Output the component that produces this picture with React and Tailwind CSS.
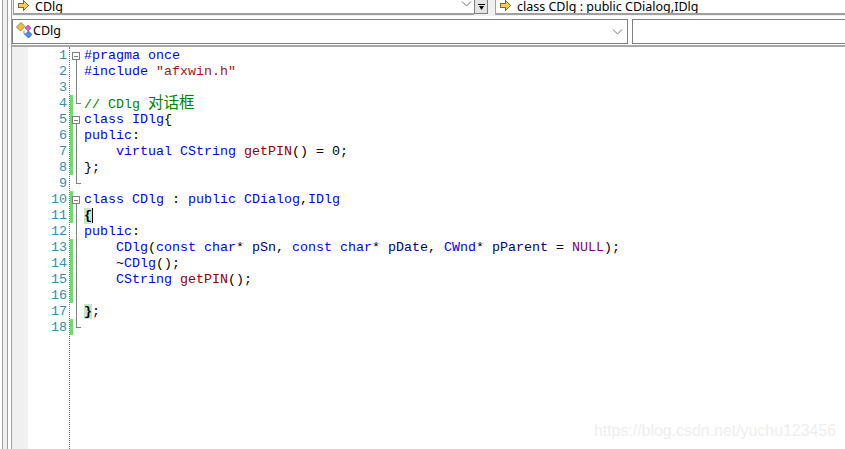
const mono = "font-['Liberation_Mono','Noto_Sans_CJK_SC',monospace]";

const KW = "text-[#0000ff]";
const FN = "text-[#880000]";
const ARG = "text-[#000080]";
const PUR = "text-[#800080]";

// which lines have the green "changed" bar
const changed = [4, 5, 6, 7, 8, 10, 11, 13, 14, 15, 16, 18];
// fold marks per line: box, line, end
const folds = {
  1: "box", 2: "line", 3: "line", 4: "end",
  5: "box", 6: "line", 7: "line", 8: "line", 9: "end",
  10: "box", 11: "line", 12: "line", 13: "line", 14: "line", 15: "line", 16: "line", 17: "line", 18: "end",
};

const lines = [
  <span className={KW}>#pragma once</span>,
  <>
    <span className={KW}>#include </span>
    <span className="text-[#a31515]">"afxwin.h"</span>
  </>,
  null,
  <span className="text-[#008000]">
    // CDlg <span className="text-[15.5px]">对话框</span>
  </span>,
  <>
    <span className={KW}>class IDlg</span>
    <span className="text-black">{"{"}</span>
  </>,
  <>
    <span className={KW}>public</span>:
  </>,
  <>
    <span className={KW}>{"    virtual CString "}</span>
    <span className={FN}>getPIN</span>() = 0;
  </>,
  <>{"};"}</>,
  null,
  <>
    <span className={KW}>class CDlg </span>: <span className={KW}>public CDialog</span>,<span className={KW}>IDlg</span>
  </>,
  <span className="inline-flex">
    <span className="bg-[#c8e6c9] font-bold text-black">{"{"}</span>
    <span className="w-px h-[15px] bg-black" />
  </span>,
  <>
    <span className={KW}>public</span>:
  </>,
  <>
    <span className={KW}>{"    CDlg"}</span>(<span className={KW}>const char</span>* <span className={ARG}>pSn</span>,{" "}
    <span className={KW}>const char</span>* <span className={ARG}>pDate</span>, <span className={KW}>CWnd</span>*{" "}
    <span className={ARG}>pParent</span> = <span className={PUR}>NULL</span>);
  </>,
  <>
    {"    ~"}
    <span className={KW}>CDlg</span>();
  </>,
  <>
    <span className={KW}>{"    CString "}</span>
    <span className={FN}>getPIN</span>();
  </>,
  null,
  <>
    <span className="bg-[#c8e6c9] font-bold text-black">{"}"}</span>;
  </>,
  null,
];

function Gutter({ n }) {
  const kind = folds[n];
  return (
    <svg width="14" height="16" className="block" shapeRendering="crispEdges">
      {changed.includes(n) && <rect x="0" y="0" width="3" height="16" fill="#66e066" />}
      {kind === "box" && (
        <>
          <rect x="2.5" y="5.5" width="7" height="7" fill="#fff" stroke="#808080" />
          <path d="M4 9h4M6.5 13v3" stroke="#808080" fill="none" />
        </>
      )}
      {kind === "line" && <path d="M6.5 0v16" stroke="#808080" fill="none" />}
      {kind === "end" && <path d="M6.5 0v8.5H11" stroke="#808080" fill="none" />}
    </svg>
  );
}

function ArrowIcon() {
  return (
    <svg width="11" height="12" viewBox="0 0 11 12" className="block" shapeRendering="crispEdges">
      <path d="M0.5 3.5h5v-3l5 5-5 5v-3h-5z" fill="#f5cf55" stroke="#7a6a30" />
    </svg>
  );
}

function ClassIcon() {
  return (
    <svg width="16" height="16" viewBox="0 0 16 16" className="block">
      <path d="M0.500 5l4.500-4.500 4 4-4.500 4.500z" fill="#e8c040" stroke="#8a7020" strokeWidth="0.8" />
      <path d="M8 8.500v3.500h2" stroke="#7a8aa0" fill="none" />
      <path d="M9 6l3-3 3 3-3 3z" fill="#e060d0" stroke="#904090" strokeWidth="0.7" />
      <path d="M9 12.500l3.500-3.500 3.500 3.500-3.500 3.500z" fill="#4a90e0" stroke="#2a5a9a" strokeWidth="0.7" />
    </svg>
  );
}

function Chevron() {
  return (
    <svg width="11" height="6" viewBox="0 0 11 6" className="block">
      <path d="M1 0.500l4.500 4.500 4.500-4.500" stroke="#707070" fill="none" />
    </svg>
  );
}

export default function App() {
  return (
    <div className="relative flex h-[449px] w-[845px] overflow-hidden bg-white">
      {/* Left window edge */}
      <div className="flex w-[12px] shrink-0">
        <div className="w-[2px] bg-white" />
        <div className="w-[1px] bg-[#a0a0a0]" />
        <div className="w-[4px] bg-[#f0f0f0]" />
        <div className="w-[1px] bg-[#6fa8d0]" />
        <div className="w-[3px] bg-white" />
        <div className="w-[1px] bg-[#6fa8d0]" />
      </div>

      <div className="flex min-w-0 flex-1 flex-col">
        {/* Class combo row, cut off by the crop */}
        <div className="flex h-[16px] shrink-0 bg-[#f0f0f0] font-['Noto_Sans',sans-serif] text-[12.5px] text-black">
          <div className="ml-[1px] flex h-[15px] w-[461px] items-end justify-between overflow-hidden border-b-2 border-l border-[#a0a0a0] bg-white">
            <div className="flex h-[13px] items-center">
              <div className="ml-[4px] mb-[2px]">
                <ArrowIcon />
              </div>
              <span className="ml-[6px] mb-[1px] leading-[13px]">CDlg</span>
            </div>
            <div className="mr-[2px] mb-[6px]">
              <Chevron />
            </div>
          </div>
          <div className="flex h-[14px] w-[14px] items-end justify-center border-x border-b border-[#808080] bg-[#e4e4e4] pb-[3px]">
            <svg width="7" height="6" viewBox="0 0 7 6" className="block">
              <path d="M0 0h7v1H0zM1 2h5L3.500 6z" fill="#000" />
            </svg>
          </div>
          <div className="ml-[7px] flex h-[15px] flex-1 items-end overflow-hidden border-b-2 border-l border-[#a0a0a0] bg-white">
            <div className="flex h-[13px] items-center">
              <div className="ml-[4px] mb-[2px]">
                <ArrowIcon />
              </div>
              <span className="ml-[6px] mb-[1px] leading-[13px]">class CDlg : public CDialog,IDlg</span>
            </div>
          </div>
        </div>

        {/* Member combo row */}
        <div className="mt-[3px] flex h-[25px] shrink-0 gap-[4px] font-['Noto_Sans',sans-serif] text-[12.5px] text-black">
          <div className="flex w-[616px] items-center justify-between border border-[#808080] bg-white">
            <div className="flex items-center">
              <div className="ml-[3px] mb-[3px]">
                <ClassIcon />
              </div>
              <span className="ml-[1px]">CDlg</span>
            </div>
            <div className="mr-[4px]">
              <Chevron />
            </div>
          </div>
          <div className="flex-1 border-y border-l border-[#808080] bg-white" />
        </div>
        <div className="mt-[1px] h-[2px] shrink-0 bg-[#a8a8a8]" />

        {/* Editor */}
        <div className={`flex min-h-0 flex-1 text-[13.33px] leading-[16px] text-black ${mono}`}>
          <div className="w-[16px] shrink-0 bg-[#f0f0f0]" />
          <div className="w-[42px] shrink-0 border-r border-dotted border-[#2b91af] pt-[1px] pr-[2px] text-right text-[#2b91af]">
            {lines.map((_, i) => (
              <div key={i} className="h-[16px]">
                {i + 1}
              </div>
            ))}
          </div>
          <div className="w-[14px] shrink-0">
            {lines.map((_, i) => (
              <Gutter key={i} n={i + 1} />
            ))}
          </div>
          <div className="flex-1 pt-[1px]">
            {lines.map((line, i) => (
              <div key={i} className="h-[16px] whitespace-pre">
                {line}
              </div>
            ))}
          </div>
        </div>
      </div>

      {/* Blog watermark */}
      <div className="absolute right-[9px] bottom-[9px] font-['Liberation_Sans',sans-serif] text-[15.9px] leading-[18px] text-[#eeeeee]">
        https://blog.csdn.net/yuchu123456
      </div>
    </div>
  );
}
